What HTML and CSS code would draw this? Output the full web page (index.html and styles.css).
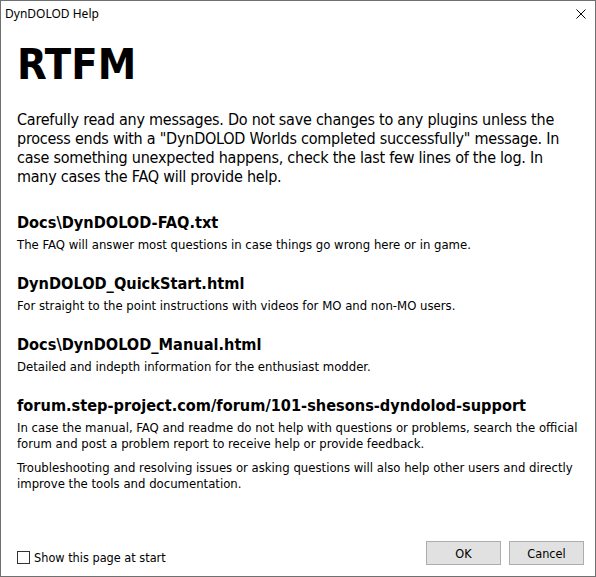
FILE: index.html
```html
<!DOCTYPE html>
<html>
<head>
<meta charset="utf-8">
<title>DynDOLOD Help</title>
<link rel="stylesheet" href="styles.css">
</head>
<body>
<div class="window">
  <div class="titlebar">
    <span class="title">DynDOLOD Help</span>
    <svg class="close" width="10" height="10" viewBox="0 0 10 10"><path d="M0.5 0.5 L9.5 9.5 M9.5 0.5 L0.5 9.5" stroke="#000" stroke-width="1" fill="none"/></svg>
  </div>
  <div class="content">
    <h1 class="big">RTFM</h1>
    <p class="intro">Carefully read any messages. Do not save changes to any plugins unless the process ends with a "DynDOLOD Worlds completed successfully" message. In case something unexpected happens, check the last few lines of the log. In many cases the FAQ will provide help.</p>
    <div class="section">
      <h2>Docs\DynDOLOD-FAQ.txt</h2>
      <p>The FAQ will answer most questions in case things go wrong here or in game.</p>
    </div>
    <div class="section">
      <h2>DynDOLOD_QuickStart.html</h2>
      <p>For straight to the point instructions with videos for MO and non-MO users.</p>
    </div>
    <div class="section">
      <h2>Docs\DynDOLOD_Manual.html</h2>
      <p>Detailed and indepth information for the enthusiast modder.</p>
    </div>
    <div class="section">
      <h2>forum.step-project.com/forum/101-shesons-dyndolod-support</h2>
      <p>In case the manual, FAQ and readme do not help with questions or problems, search the official<br>forum and post a problem report to receive help or provide feedback.</p>
      <p>Troubleshooting and resolving issues or asking questions will also help other users and directly<br>improve the tools and documentation.</p>
    </div>
  </div>
  <div class="footer">
    <label class="check"><span class="box"></span>Show this page at start</label>
    <div class="buttons">
      <button class="btn">OK</button>
      <button class="btn">Cancel</button>
    </div>
  </div>
</div>
</body>
</html>
```
FILE: styles.css
```css
html, body {
  margin: 0;
  padding: 0;
  background: #ffffff;
}
.window {
  width: 596px;
  height: 577px;
  box-sizing: border-box;
  border: 1px solid #707070;
  background: #ffffff;
  display: flex;
  flex-direction: column;
  font-family: "DejaVu Sans Condensed", "DejaVu Sans", sans-serif;
  color: #000;
}
.titlebar {
  height: 29px;
  display: flex;
  align-items: center;
  justify-content: space-between;
  padding: 0 9px 0 4px;
  flex: none;
}
.title {
  font-family: "Noto Sans", "Open Sans", sans-serif;
  font-size: 12px;
  margin-top: -4px;
}
.close {
  display: block;
  margin-top: -4px;
}
.content {
  flex: 1;
  padding: 0 16px 0 16px;
}
.big {
  font-size: 43px;
  font-weight: bold;
  margin: 8px 0 0 0;
  line-height: 52px;
}
.intro {
  font-size: 16px;
  line-height: 19px;
  letter-spacing: -0.24px;
  margin: 20px 0 0 0;
}
.section {
  margin-top: 27px;
}
.section + .section {
  margin-top: 21px;
}
.section h2 {
  font-size: 16.2px;
  font-weight: bold;
  margin: 0;
  line-height: 20px;
}
.section p {
  font-size: 13px;
  line-height: 16px;
  margin: 4px -14px 0 0;
  white-space: nowrap;
}
.section p + p {
  margin-top: 8px;
}
.footer {
  flex: none;
  display: flex;
  align-items: flex-end;
  justify-content: space-between;
  padding: 0 11px 11px 16px;
}
.check {
  display: flex;
  align-items: center;
  font-size: 12.6px;
  line-height: 13px;
  margin-bottom: 1px;
}
.box {
  width: 11px;
  height: 11px;
  border: 1px solid #333;
  margin-right: 4px;
  background: #fff;
}
.buttons {
  display: flex;
  gap: 8px;
}
.btn {
  width: 75px;
  height: 24px;
  background: #e1e1e1;
  border: 1px solid #adadad;
  font-family: "DejaVu Sans Condensed", "DejaVu Sans", sans-serif;
  font-size: 12.6px;
  color: #000;
  padding: 0;
}
```
